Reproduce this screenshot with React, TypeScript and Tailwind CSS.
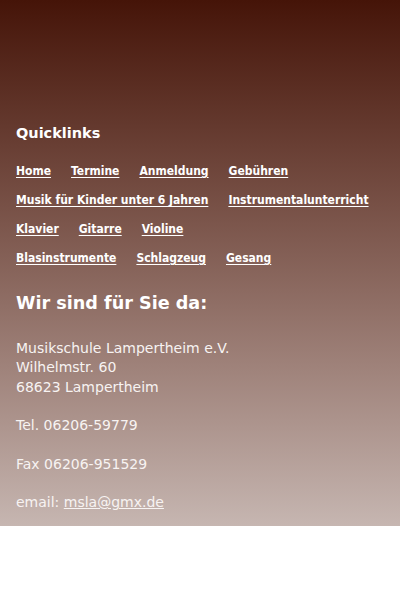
import React from 'react';

const rows: string[][] = [
  ['Home', 'Termine', 'Anmeldung', 'Gebühren'],
  ['Musik für Kinder unter 6 Jahren', 'Instrumentalunterricht'],
  ['Klavier', 'Gitarre', 'Violine'],
  ['Blasinstrumente', 'Schlagzeug', 'Gesang'],
];

const App: React.FC = () => {
  return (
    <div className="min-h-[611px] bg-white font-['DejaVu_Sans',Verdana,sans-serif]">
      <footer className="w-[400px] h-[526px] bg-gradient-to-b from-[#451408] to-[#c6b6b1] px-4 pt-[125px] text-white">
        <h3 className="text-[14.5px] leading-[17px] font-bold">Quicklinks</h3>
        <div className="mt-[22px] flex flex-col gap-[15px]">
          {rows.map((row, i) => (
            <div
              key={i}
              className="flex gap-[20px] font-['DejaVu_Sans_Condensed','DejaVu_Sans',sans-serif] [font-stretch:condensed] text-[12px] leading-[14px] font-bold"
            >
              {row.map((link) => (
                <a key={link} href="#" className="underline underline-offset-2">
                  {link}
                </a>
              ))}
            </div>
          ))}
        </div>
        <h2 className="mt-[27px] text-[17.6px] leading-[22px] font-bold">Wir sind für Sie da:</h2>
        <div className="mt-[25px] text-[14px] leading-[19.3px] text-[#f7f3f2]">
          <p>Musikschule Lampertheim e.V.</p>
          <p>Wilhelmstr. 60</p>
          <p>68623 Lampertheim</p>
          <p className="mt-[19.3px]">Tel. 06206-59779</p>
          <p className="mt-[19.3px]">Fax 06206-951529</p>
          <p className="mt-[19.3px]">
            email: <a href="#" className="underline">msla@gmx.de</a>
          </p>
        </div>
      </footer>
    </div>
  );
};

export default App;
